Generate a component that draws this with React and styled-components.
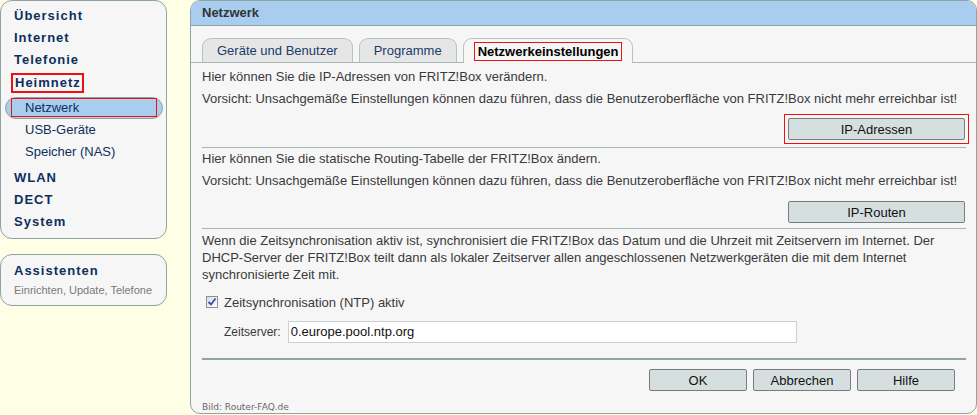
import React from "react";
import styled, { createGlobalStyle } from "styled-components";

const GlobalStyle = createGlobalStyle`
  html, body {
    margin: 0;
    padding: 0;
    background: #ffffe6;
  }
  body {
    font-family: "Liberation Sans", Arial, sans-serif;
  }
  * {
    box-sizing: border-box;
  }
`;

const mainNav = ["Übersicht", "Internet", "Telefonie"];
const subNav = ["USB-Geräte", "Speicher (NAS)"];
const lowerNav = ["WLAN", "DECT", "System"];

const App = () => {
  return (
    <Page>
      <GlobalStyle />
      <Sidebar>
        <NavBox>
          {mainNav.map((item) => (
            <TopItem key={item}>{item}</TopItem>
          ))}
          <TopItem>
            <Marked>Heimnetz</Marked>
          </TopItem>
          <SubList>
            <ActiveSub>
              <SubMark>Netzwerk</SubMark>
            </ActiveSub>
            {subNav.map((item) => (
              <SubItem key={item}>{item}</SubItem>
            ))}
          </SubList>
          {lowerNav.map((item) => (
            <TopItem key={item}>{item}</TopItem>
          ))}
        </NavBox>
        <AssistBox>
          <AssistTitle>Assistenten</AssistTitle>
          <AssistSub>Einrichten, Update, Telefone</AssistSub>
        </AssistBox>
      </Sidebar>

      <Panel>
        <Header>Netzwerk</Header>
        <TabBar>
          <Tab>Geräte und Benutzer</Tab>
          <Tab>Programme</Tab>
          <Tab $active>
            <TabMark>Netzwerkeinstellungen</TabMark>
          </Tab>
        </TabBar>

        <Section $top={3} $bottom={7}>
          <Line>Hier können Sie die IP-Adressen von FRITZ!Box verändern.</Line>
          <Line>
            Vorsicht: Unsachgemäße Einstellungen können dazu führen, dass die
            Benutzeroberfläche von FRITZ!Box nicht mehr erreichbar ist!
          </Line>
          <ButtonRow $gap={8}>
            <ButtonMark>
              <WideButton>IP-Adressen</WideButton>
            </ButtonMark>
          </ButtonRow>
        </Section>

        <Section $top={0} $bottom={5}>
          <Line>Hier können Sie die statische Routing-Tabelle der FRITZ!Box ändern.</Line>
          <Line>
            Vorsicht: Unsachgemäße Einstellungen können dazu führen, dass die
            Benutzeroberfläche von FRITZ!Box nicht mehr erreichbar ist!
          </Line>
          <ButtonRow $gap={9}>
            <WideButton>IP-Routen</WideButton>
          </ButtonRow>
        </Section>

        <Section $top={3} $bottom={15} $thick>
          <Para>
            Wenn die Zeitsynchronisation aktiv ist, synchronisiert die FRITZ!Box das Datum und die
            Uhrzeit mit Zeitservern im Internet. Der
            <br />
            DHCP-Server der FRITZ!Box teilt dann als lokaler Zeitserver allen angeschlossenen
            Netzwerkgeräten die mit dem Internet
            <br />
            synchronisierte Zeit mit.
          </Para>
          <CheckRow>
            <CheckBox>
              <svg width="10" height="10" viewBox="0 0 10 10">
                <path
                  d="M1.5 5 L4 7.5 L8.5 1.5"
                  fill="none"
                  stroke="#2f4fa8"
                  strokeWidth="1.8"
                />
              </svg>
            </CheckBox>
            <CheckLabel>Zeitsynchronisation (NTP) aktiv</CheckLabel>
          </CheckRow>
          <FieldRow>
            <FieldLabel>Zeitserver:</FieldLabel>
            <TextField>0.europe.pool.ntp.org</TextField>
          </FieldRow>
        </Section>

        <ActionRow>
          <ActionButton>OK</ActionButton>
          <ActionButton>Abbrechen</ActionButton>
          <ActionButton>Hilfe</ActionButton>
        </ActionRow>

        <Footer>Bild: Router-FAQ.de</Footer>
      </Panel>
    </Page>
  );
};

const Page = styled.div`
  display: flex;
  align-items: flex-start;
  width: 977px;
  height: 415px;
  overflow: hidden;
`;

const Sidebar = styled.div`
  width: 167px;
  flex-shrink: 0;
  display: flex;
  flex-direction: column;
  gap: 15px;
`;

const NavBox = styled.div`
  background: #f6f6f6;
  border: 1px solid #8ea3a3;
  border-radius: 12px;
  padding: 4px 0 5px;
  height: 239px;
`;

const TopItem = styled.div`
  height: 22px;
  line-height: 22px;
  padding-left: 13px;
  font-size: 13px;
  font-weight: bold;
  letter-spacing: 1px;
  color: #0e2f5c;
  white-space: nowrap;
`;

const Marked = styled.span`
  display: inline-block;
  margin-left: -3px;
  padding: 0 1px 0 2px;
  border: 2px solid #ee1111;
  line-height: 16px;
  vertical-align: middle;
`;

const SubList = styled.div`
  margin: 4px 0;
`;

const SubItem = styled.div`
  height: 22px;
  line-height: 22px;
  padding-left: 24px;
  font-size: 13px;
  color: #0e2f5c;
`;

const ActiveSub = styled.div`
  height: 22px;
  margin: 0 3px 0 4px;
  background: #a8cdef;
  border: 1px solid #8ea3a3;
  border-radius: 11px;
`;

const SubMark = styled.div`
  height: 19px;
  margin: 0 5px;
  padding-left: 13px;
  line-height: 17px;
  border: 1px solid #ee1111;
  font-size: 13px;
  color: #0e2f5c;
`;

const AssistBox = styled.div`
  background: #f6f6f6;
  border: 1px solid #8ea3a3;
  border-radius: 12px;
  padding: 5px 0 7px 13px;
  height: 52px;
`;

const AssistTitle = styled.div`
  line-height: 22px;
  font-size: 13px;
  font-weight: bold;
  letter-spacing: 1px;
  color: #0e2f5c;
`;

const AssistSub = styled.div`
  line-height: 16px;
  font-size: 11px;
  color: #7a7a7a;
`;

const Panel = styled.div`
  margin-left: 23px;
  width: 787px;
  height: 414px;
  flex-shrink: 0;
  display: flex;
  flex-direction: column;
  background: #f6f6f6;
  border: 1px solid #8ea3a3;
  border-radius: 10px;
  overflow: hidden;
`;

const Header = styled.div`
  height: 25px;
  line-height: 24px;
  padding-left: 11px;
  background: #a8cdef;
  border-bottom: 1px solid #8ea3a3;
  font-size: 13px;
  font-weight: bold;
  color: #333;
`;

const TabBar = styled.div`
  display: flex;
  align-items: flex-end;
  gap: 6px;
  padding: 12px 0 0 11px;
  border-bottom: 1px solid #a9b8b8;
`;

const Tab = styled.div`
  height: ${(p) => (p.$active ? "25px" : "24px")};
  margin-bottom: ${(p) => (p.$active ? "-1px" : "0")};
  padding: ${(p) => (p.$active ? "3px 10px 0" : "1px 14px 0")};
  line-height: 22px;
  background: ${(p) => (p.$active ? "#f6f6f6" : "#e6e6e6")};
  border: 1px solid #b7c3c3;
  border-bottom: none;
  border-radius: 9px 9px 0 0;
  font-size: 13px;
  color: #1a3b6c;
  white-space: nowrap;
`;

const TabMark = styled.span`
  display: block;
  height: 19px;
  padding: 0 2px 0 3px;
  line-height: 17px;
  border: 1px solid #ee1111;
  font-weight: bold;
  color: #000;
`;

const Section = styled.div`
  padding: ${(p) => p.$top}px 10px ${(p) => p.$bottom}px 0;
  margin-left: 11px;
  margin-right: 10px;
  border-bottom: ${(p) => (p.$thick ? "2px solid #8ea3a3" : "1px solid #a9b8b8")};
  font-size: 13px;
  color: #3a3a3a;
`;

const Line = styled.div`
  line-height: 22px;
  white-space: nowrap;
`;

const Para = styled.div`
  line-height: 17px;
  white-space: nowrap;
`;

const ButtonRow = styled.div`
  display: flex;
  justify-content: flex-end;
  margin-top: ${(p) => p.$gap}px;
  margin-right: -9px;
`;

const ButtonMark = styled.span`
  display: flex;
  margin: -4px;
  padding: 3px;
  border: 1px solid #ee1111;
`;

const Button = styled.button`
  height: 22px;
  padding: 0;
  background: #d6dfdf;
  border: 1px solid #7c7c7c;
  border-radius: 2px;
  font-family: "Liberation Sans", Arial, sans-serif;
  font-size: 13px;
  color: #111;
`;

const WideButton = styled(Button)`
  width: 177px;
`;

const ActionButton = styled(Button)`
  width: 98px;
`;

const CheckRow = styled.div`
  display: flex;
  align-items: center;
  height: 22px;
  margin-top: 8px;
  padding-left: 4px;
`;

const CheckBox = styled.span`
  display: flex;
  align-items: center;
  justify-content: center;
  width: 12px;
  height: 12px;
  border: 1px solid #8a8f94;
  background: linear-gradient(135deg, #d9dde2, #ffffff);
`;

const CheckLabel = styled.span`
  margin-left: 6px;
`;

const FieldRow = styled.div`
  display: flex;
  align-items: center;
  gap: 7px;
  margin-top: 8px;
  padding-left: 22px;
`;

const FieldLabel = styled.span`
  font-size: 12px;
`;

const TextField = styled.div`
  width: 509px;
  height: 22px;
  line-height: 20px;
  padding-left: 2px;
  background: #fff;
  border: 1px solid #c9d2d2;
  font-size: 13px;
  color: #111;
`;

const ActionRow = styled.div`
  display: flex;
  justify-content: flex-end;
  gap: 6px;
  margin-top: 9px;
  padding-right: 21px;
`;

const Footer = styled.div`
  margin-top: auto;
  padding-left: 11px;
  line-height: 12px;
  font-family: "DejaVu Sans", Verdana, sans-serif;
  font-size: 9px;
  color: #666;
`;

export default App;
